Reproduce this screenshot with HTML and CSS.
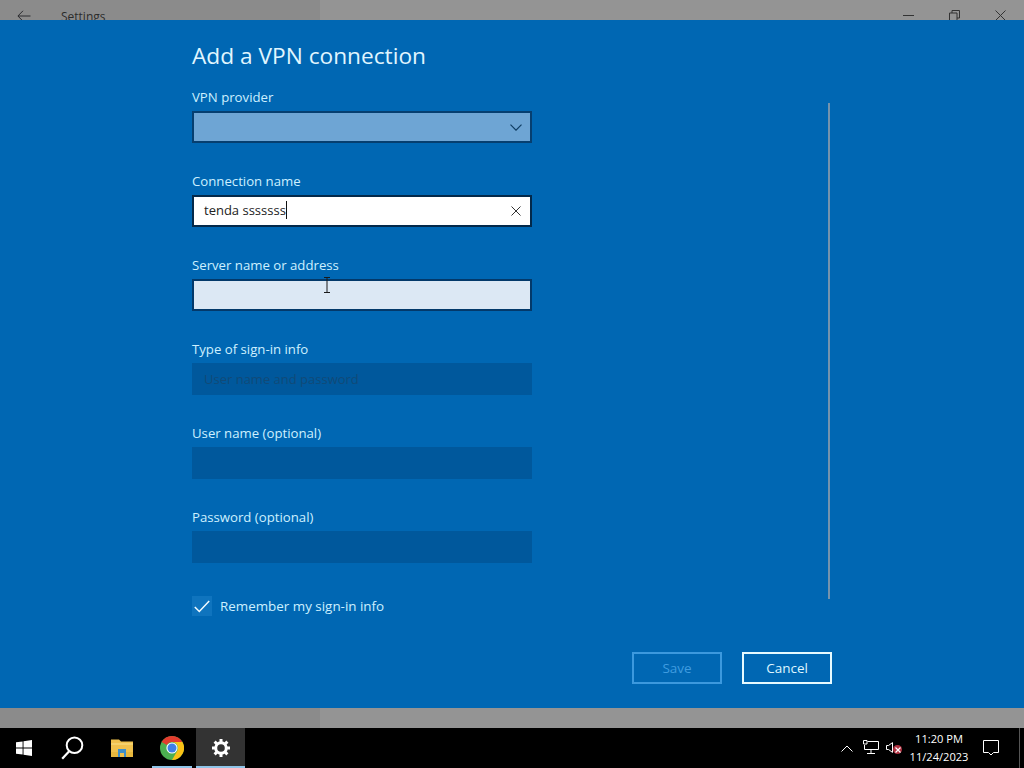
FILE: index.html
```html
<!DOCTYPE html>
<html lang="en">
<head>
<meta charset="utf-8">
<title>Add a VPN connection</title>
<link rel="stylesheet" href="styles.css">
</head>
<body>
<div class="screen">
  <header class="titlebar">
    <div class="titlebar-left">
      <svg class="back-icon" width="14" height="12" viewBox="0 0 14 12"><path d="M13.500 6H1M6 .8 .9 6 6 11.200" fill="none" stroke="#2c2c30" stroke-width="1"/></svg>
      <span class="app-name">Settings</span>
    </div>
    <div class="titlebar-right">
      <svg class="win-min" width="11" height="2" viewBox="0 0 11 2"><path d="M0 .5H11" stroke="#333" stroke-width="1"/></svg>
      <svg class="win-restore" width="11" height="11" viewBox="0 0 11 11"><path d="M.5 3h7.500v7.500H.5zM3 3V.5h7.500V8H8" fill="none" stroke="#333" stroke-width="1"/></svg>
      <svg class="win-close" width="11" height="11" viewBox="0 0 11 11"><path d="M.5.500l10 10M10.500.500l-10 10" fill="none" stroke="#333" stroke-width="1"/></svg>
    </div>
  </header>

  <main class="dialog">
    <div class="dialog-inner">
      <div class="form-pane">
        <h1 class="dialog-title">Add a VPN connection</h1>

        <div class="field">
          <label class="field-label">VPN provider</label>
          <div class="control control-select">
            <svg width="12" height="7" viewBox="0 0 12 7"><path d="M.5.700 6 6.200 11.500.700" fill="none" stroke="#0f3d63" stroke-width="1.200"/></svg>
          </div>
        </div>

        <div class="field">
          <label class="field-label">Connection name</label>
          <div class="control control-focus">
            <span class="control-text">tenda sssssss</span><span class="caret"></span>
            <svg class="clear-icon" width="10" height="10" viewBox="0 0 10 10"><path d="M.5.500l9 9M9.500.500l-9 9" fill="none" stroke="#333" stroke-width="1"/></svg>
          </div>
        </div>

        <div class="field">
          <label class="field-label">Server name or address</label>
          <div class="control control-hover">
            <svg class="ibeam" width="8" height="16" viewBox="0 0 8 16"><path d="M1 .5h6M4 .5v15M1 15.500h6" fill="none" stroke="#1a1a1a" stroke-width="1"/></svg>
          </div>
        </div>

        <div class="field">
          <label class="field-label">Type of sign-in info</label>
          <div class="control control-disabled"><span class="control-text-disabled">User name and password</span></div>
        </div>

        <div class="field">
          <label class="field-label">User name (optional)</label>
          <div class="control control-disabled"></div>
        </div>

        <div class="field">
          <label class="field-label">Password (optional)</label>
          <div class="control control-disabled"></div>
        </div>

        <div class="remember">
          <span class="checkbox">
            <svg width="16" height="13" viewBox="0 0 16 13"><path d="M.8 7 5.300 11.500 15.200 1" fill="none" stroke="#f2fbff" stroke-width="1.500"/></svg>
          </span>
          <span class="remember-text">Remember my sign-in info</span>
        </div>
      </div>
      <div class="scrollbar"></div>
    </div>
    <div class="actions">
      <button class="btn btn-disabled" type="button">Save</button>
      <button class="btn" type="button">Cancel</button>
    </div>
  </main>

  <div class="under-strip"></div>

  <footer class="taskbar">
    <div class="task-left">
      <div class="task-slot slot-start">
        <svg width="16" height="16" viewBox="0 0 16 16"><path d="M0 2.300 6.600 1.400V7.600H0zM7.500 1.250 16 0V7.600H7.500zM0 8.400H6.600V14.600L0 13.700zM7.500 8.400H16V16L7.500 14.750z" fill="#fff"/></svg>
      </div>
      <div class="task-slot slot-search">
        <svg width="23" height="24" viewBox="0 0 23 24"><circle cx="13.500" cy="9.300" r="7.800" fill="none" stroke="#fff" stroke-width="2"/><path d="M8.200 15.200 1.200 22.800" fill="none" stroke="#fff" stroke-width="2.200"/></svg>
      </div>
      <div class="task-slot slot-folder">
        <svg width="22" height="20" viewBox="0 0 22 20"><path d="M0 1.500h8l2 2h12V19H0z" fill="#f0c14d"/><path d="M0 5.500h22V6.500H0z" fill="#fbe08c"/><path d="M0 14h22v5H0z" fill="#e8b83e"/><path d="M7 11h8v8H7z" fill="#3f8fc9"/><path d="M9 15h4v4H9z" fill="#f0c14d"/></svg>
      </div>
      <div class="task-slot slot-chrome running">
        <svg width="24" height="24" viewBox="0 0 24 24">
          <circle cx="12" cy="12" r="12" fill="#4caf50"/>
          <path d="M12 0A12 12 0 0 1 22.400 6H12A6 6 0 0 0 6.800 9L1.600 6A12 12 0 0 1 12 0Z" fill="#e33b2e"/>
          <path d="M22.400 6A12 12 0 0 1 12 24L17.200 15A6 6 0 0 0 17.200 9 6 6 0 0 0 12 6Z" fill="#fbc116"/>
          <circle cx="12" cy="12" r="5.600" fill="#fff"/>
          <circle cx="12" cy="12" r="4.500" fill="#3f7fe8"/>
        </svg>
      </div>
      <div class="task-slot slot-settings running">
        <svg width="18" height="18" viewBox="0 0 18 18"><circle cx="9" cy="9" r="5.300" fill="none" stroke="#fff" stroke-width="3"/><path d="M9 0v3.500M9 14.500V18M0 9h3.500M14.500 9H18M2.600 2.600 5 5M13 13l2.400 2.400M15.400 2.600 13 5M5 13l-2.400 2.400" fill="none" stroke="#fff" stroke-width="3"/></svg>
      </div>
    </div>
    <div class="tray">
      <svg class="tray-caret" width="12" height="7" viewBox="0 0 12 7"><path d="M.5 6.500 6 1l5.500 5.500" fill="none" stroke="#fff" stroke-width="1"/></svg>
      <svg class="tray-net" width="16" height="14" viewBox="0 0 16 14"><path d="M4.500 1.500H15.500V9.500H1.500V5M8 9.500V13M4 13.500H12M.5 .5h3.500v3.500h-3.500z" fill="none" stroke="#fff" stroke-width="1"/></svg>
      <span class="tray-vol">
        <svg width="7" height="11" viewBox="0 0 7 11"><path d="M.5 3.500H2.500L6.500 .6V10.400L2.500 7.500H.5z" fill="none" stroke="#fff" stroke-width="1"/></svg>
        <span class="mute-badge">
          <svg width="8" height="8" viewBox="0 0 8 8"><path d="M1.500 1.500l5 5M6.500 1.500l-5 5" stroke="#fff" stroke-width="1.200"/></svg>
        </span>
      </span>
      <div class="clock"><span>11:20 PM</span><span>11/24/2023</span></div>
      <svg class="tray-notify" width="16" height="16" viewBox="0 0 16 16"><path d="M.5.500H15.500V12.500H10.500L8 15 5.500 12.500H.5z" fill="none" stroke="#fff" stroke-width="1"/></svg>
      <div class="show-desktop"></div>
    </div>
  </footer>
</div>
</body>
</html>
```
FILE: styles.css
```css
* { box-sizing: border-box; }
html, body { margin: 0; padding: 0; }
body { font-family: "Open Sans", "Liberation Sans", sans-serif; background: #000; }
.screen { width: 1024px; height: 768px; display: flex; flex-direction: column; overflow: hidden; }

.titlebar { height: 20px; display: flex; background: #949494; overflow: hidden; flex: none; }
.titlebar-left { width: 320px; background: #8b8b8b; display: flex; align-items: flex-start; padding: 10px 0 0 17px; }
.back-icon { flex: none; }
.app-name { margin-left: 30px; margin-top: -2px; font-size: 12px; line-height: 18px; color: #2b2b2b; }
.titlebar-right { flex: 1; display: flex; justify-content: flex-end; align-items: flex-start; padding: 10px 18px 0 0; gap: 35px; }
.win-min { margin-top: 5px; }

.dialog { height: 688px; flex: none; background: #0067b3; padding: 0 192px; position: relative; }
.dialog-inner { height: 632px; position: relative; }
.form-pane { width: 340px; }
.dialog-title { margin: 0; height: 67px; padding-top: 19px; font-weight: 400; font-size: 22.700px; line-height: 34px; color: #e0f6ff; white-space: nowrap; }
.field { height: 84px; }
.field-label { display: block; height: 24px; font-size: 13.200px; line-height: 20px; color: #cdf0ff; white-space: nowrap; }
.control { height: 32px; width: 340px; display: flex; align-items: center; position: relative; }
.control-select { background: #6ea5d4; border: 2px solid #063f70; justify-content: flex-end; padding-right: 8px; }
.control-focus { background: #fff; border: 2px solid #03294a; padding: 0 10px 2px; }
.control-text { font-size: 13px; color: #222; white-space: nowrap; }
.caret { width: 1px; height: 18px; background: #111; margin-left: 0; }
.clear-icon { position: absolute; right: 9px; top: 9px; }
.control-hover { background: #dce8f4; border: 2px solid #03396a; }
.ibeam { position: absolute; left: 129px; top: -4px; }
.control-disabled { background: #00589c; padding: 0 12px; }
.control-text-disabled { font-size: 13px; color: #104a78; white-space: nowrap; }

.remember { display: flex; align-items: center; gap: 8px; margin-top: 5px; }
.checkbox { width: 20px; height: 20px; background: #0f74be; display: flex; align-items: center; justify-content: center; }
.remember-text { font-size: 13.400px; line-height: 20px; color: #cdf0ff; white-space: nowrap; }

.scrollbar { position: absolute; left: 636px; top: 83px; width: 2px; height: 496px; background: #7493ad; }

.actions { display: flex; justify-content: flex-end; gap: 20px; width: 640px; }
.btn { width: 90px; height: 32px; background: transparent; border: 2px solid #e6faff; color: #dff6ff; font-family: inherit; font-size: 13.500px; padding: 0; }
.btn-disabled { border-color: #3c99de; color: #3f9ce0; }

.under-strip { height: 20px; flex: none; background: linear-gradient(to right, #8b8b8b 320px, #949494 320px); }

.taskbar { height: 40px; flex: none; background: #000; display: flex; justify-content: space-between; }
.task-left { display: flex; }
.task-slot { display: flex; align-items: center; justify-content: center; height: 40px; position: relative; }
.slot-start { width: 48px; }
.slot-search { width: 48px; }
.slot-folder { width: 52px; }
.slot-chrome { width: 48px; }
.slot-settings { width: 49px; background: #333; }
.running::after { content: ""; position: absolute; left: 4px; right: 4px; bottom: 0; height: 2px; background: #8fc4e8; }
.slot-settings.running::after { left: 0; right: 0; }

.tray { display: flex; align-items: center; color: #fff; }
.tray-caret { margin-right: 10px; }
.tray-net { margin-right: 7px; margin-top: -3px; }
.tray-vol { width: 16px; height: 14px; position: relative; display: flex; align-items: center; margin-top: -2px; }
.mute-badge { position: absolute; left: 7px; top: 5px; width: 9px; height: 9px; border-radius: 50%; background: #b03040; display: flex; align-items: center; justify-content: center; }
.clock { width: 60px; margin-left: 7px; display: flex; flex-direction: column; align-items: center; font-size: 11.100px; line-height: 18px; }
.tray-notify { margin-left: 14px; margin-right: 20px; }
.show-desktop { width: 1px; height: 40px; background: #555; margin-right: 4px; }
```
